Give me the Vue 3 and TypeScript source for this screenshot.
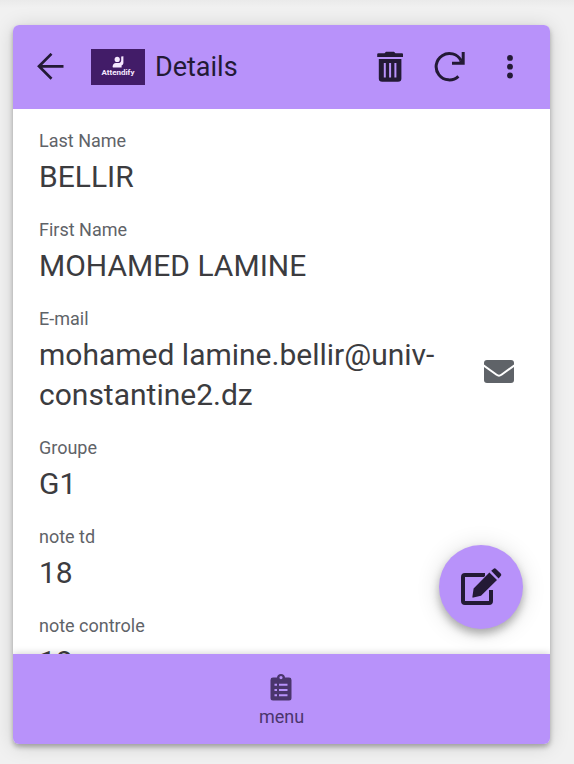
<script setup lang="ts">
import { ref } from 'vue'

interface Field {
  label: string
  value: string
  email?: boolean
}

const fields = ref<Field[]>([
  { label: 'Last Name', value: 'BELLIR' },
  { label: 'First Name', value: 'MOHAMED LAMINE' },
  { label: 'E-mail', value: 'mohamed lamine.bellir@univ-constantine2.dz', email: true },
  { label: 'Groupe', value: 'G1' },
  { label: 'note td', value: '18' },
  { label: 'note controle', value: '18' },
])
</script>

<template>
  <div class="page">
    <div class="card">
      <header class="bar">
        <button class="icon-btn back" type="button" aria-label="Back">
          <svg width="28" height="28" viewBox="0 0 28 28" fill="none" stroke="currentColor" stroke-width="2.7">
            <path d="M26.5 13.3H2.5M14.5 0.8 2 13.3 14.5 25.8" />
          </svg>
        </button>
        <div class="brand">
          <svg width="12" height="12" viewBox="0 0 12 12" fill="currentColor">
            <circle cx="5.2" cy="3.4" r="2.6" />
            <path d="M9.2 0.6 11.4 0.2V7.2Q11 9 9.6 9.4V11.6H1.2Q0.6 11.6 0.6 10.8Q0.8 7 4 7H7.4Q9.2 6.6 9.2 4.6Z" />
          </svg>
          <span class="brand-name">Attendify</span>
        </div>
        <h1 class="title">Details</h1>
        <div class="actions">
          <button class="icon-btn" type="button" aria-label="Delete">
            <svg width="32" height="32" viewBox="0 0 32 32">
              <path fill="currentColor" d="M4.5 2.2H10.5L12 0.8H20L21.5 2.2H28Q29 2.2 29 3.2V6H3.2V3.2Q3.2 2.2 4.5 2.2ZM4.8 8H27.4V27.5Q27.4 30.8 24 30.8H8.2Q4.8 30.8 4.8 27.5Z" />
              <path class="slots" d="M10.8 12V26.5M16.1 12V26.5M21.4 12V26.5" />
            </svg>
          </button>
          <button class="icon-btn" type="button" aria-label="Refresh">
            <svg width="32" height="32" viewBox="0 0 32 32" fill="none" stroke="currentColor" stroke-width="3">
              <path d="M27 9.5A13.2 13.2 0 1 0 24.4 25.3M29.2 1V12.2H18" />
              <path d="M29 7V12H24Z" fill="currentColor" stroke="none" />
            </svg>
          </button>
          <button class="icon-btn" type="button" aria-label="More options">
            <svg width="32" height="32" viewBox="0 0 32 32" fill="currentColor">
              <circle cx="16" cy="6.9" r="2.9" />
              <circle cx="16" cy="15.7" r="2.9" />
              <circle cx="16" cy="24.5" r="2.9" />
            </svg>
          </button>
        </div>
      </header>

      <main class="body">
        <dl class="fields">
          <div v-for="field in fields" :key="field.label" class="field">
            <div class="text">
              <dt class="label">{{ field.label }}</dt>
              <dd class="value">{{ field.value }}</dd>
            </div>
            <a v-if="field.email" class="mail" href="mailto:" aria-label="Send e-mail">
              <svg width="30" height="23" viewBox="0 0 30 23">
                <rect width="30" height="23" rx="3" fill="currentColor" />
                <path d="M-1 5 12.6 14.8Q15 16.6 17.4 14.8L31 5" fill="none" stroke="#fff" stroke-width="2" />
              </svg>
            </a>
          </div>
        </dl>
        <button class="fab" type="button" aria-label="Edit">
          <svg width="42" height="38" viewBox="0 0 42 38">
            <path fill="none" stroke="currentColor" stroke-width="4" stroke-linejoin="round" d="M25 7H5Q3 7 3 9V33Q3 35 5 35H29Q31 35 31 33V22" />
            <g fill="currentColor" stroke="#b892fa" stroke-width="1.4" paint-order="stroke">
              <path d="M29.4 4.4 37 12 21 27.8 13.3 29.6Q12.2 29.8 12.4 28.7L13.6 20.4Z" />
              <path d="M31.2 2.8 33.4 0.9Q34.7 -0.2 36 0.9L40.7 5.5Q41.8 6.8 40.7 8.1L38.6 10.4Z" />
            </g>
          </svg>
        </button>
      </main>

      <nav class="nav">
        <a class="tab" href="#menu">
          <svg width="22" height="28" viewBox="0 0 22 28">
            <path fill="currentColor" fill-rule="evenodd" d="M3 3.6H7Q7.4 0 11 0T15 3.6H19Q21.5 3.6 21.5 6V24.1Q21.5 26.6 19 26.6H3Q0.5 26.6 0.5 24.1V6Q0.5 3.6 3 3.6ZM11 2A1.6 1.6 0 1 0 11 5.2A1.6 1.6 0 1 0 11 2Z" />
            <g class="lines">
              <path d="M9 10.8H17.5M9 16H17.5M9 21.2H17.5" />
              <path d="M4.5 10.8H7M4.5 16H7M4.5 21.2H7" />
            </g>
          </svg>
          <span>menu</span>
        </a>
      </nav>
    </div>
  </div>
</template>

<style>
body {
  background: #f1f1f1;
}
</style>

<style scoped>
.page {
  box-sizing: border-box;
  height: 100vh;
  padding: 25px 24px 20px 13px;
  display: flex;
  background: linear-gradient(#eaeaea, #f1f1f1 8px);
  font-family: Roboto, "Liberation Sans", sans-serif;
  color: #3c3c3f;
}
.card {
  flex: 1;
  min-width: 0;
  display: flex;
  flex-direction: column;
  overflow: hidden;
  border-radius: 6px;
  background: #fff;
  box-shadow: 0 3px 5px rgba(0, 0, 0, 0.28), 0 2px 20px rgba(0, 0, 0, 0.15);
}
.bar {
  display: flex;
  align-items: center;
  padding: 24px;
  background: #b892fa;
  color: #231a35;
}
.icon-btn {
  display: flex;
  padding: 0;
  border: 0;
  background: none;
  color: inherit;
  cursor: pointer;
}
.back {
  margin-right: 26px;
}
.brand {
  box-sizing: border-box;
  width: 54px;
  height: 36px;
  padding-top: 7px;
  display: flex;
  flex-direction: column;
  align-items: center;
  background: #421c68;
  color: #f6e8ff;
}
.brand-name {
  font: 700 8px/10px "Liberation Sans Narrow", Roboto, sans-serif;
}
.title {
  margin: 0 0 0 10px;
  font-size: 27px;
  line-height: 36px;
  font-weight: 400;
}
.actions {
  display: flex;
  gap: 28px;
  margin-left: auto;
}
.slots {
  fill: none;
  stroke: #b892fa;
  stroke-width: 2;
}
.body {
  position: relative;
  flex: 1;
  min-height: 0;
  display: flex;
}
.fields {
  flex: 1;
  margin: 0;
  padding: 20px 36px 20px 26px;
  display: flex;
  flex-direction: column;
  gap: 21px;
  overflow-y: auto;
  scrollbar-width: none;
}
.field {
  display: flex;
  align-items: center;
  justify-content: space-between;
  gap: 24px;
}
.text {
  min-width: 0;
}
.label {
  margin-bottom: 4px;
  font-size: 18px;
  line-height: 24px;
  color: #5f6368;
}
.value {
  margin: 0;
  font-size: 30px;
  line-height: 40px;
}
.mail {
  display: flex;
  padding-top: 20px;
  color: #5f6368;
}
.fab {
  position: absolute;
  right: 27px;
  bottom: 25px;
  width: 84px;
  height: 84px;
  display: flex;
  align-items: center;
  justify-content: center;
  padding: 0;
  border: 0;
  border-radius: 50%;
  background: #b892fa;
  color: #231a35;
  box-shadow: 0 5px 8px rgba(0, 0, 0, 0.28), 0 2px 24px rgba(0, 0, 0, 0.14);
  cursor: pointer;
}
.nav {
  position: relative;
  display: flex;
  justify-content: center;
  padding: 20px 0 15px;
  background: #b892fa;
  box-shadow: 0 0 8px rgba(0, 0, 0, 0.2);
}
.tab {
  display: flex;
  flex-direction: column;
  align-items: center;
  gap: 3px;
  font-size: 18px;
  line-height: 24px;
  color: #4a356c;
  text-decoration: none;
}
.lines {
  stroke: #b892fa;
  stroke-width: 2;
}
</style>
